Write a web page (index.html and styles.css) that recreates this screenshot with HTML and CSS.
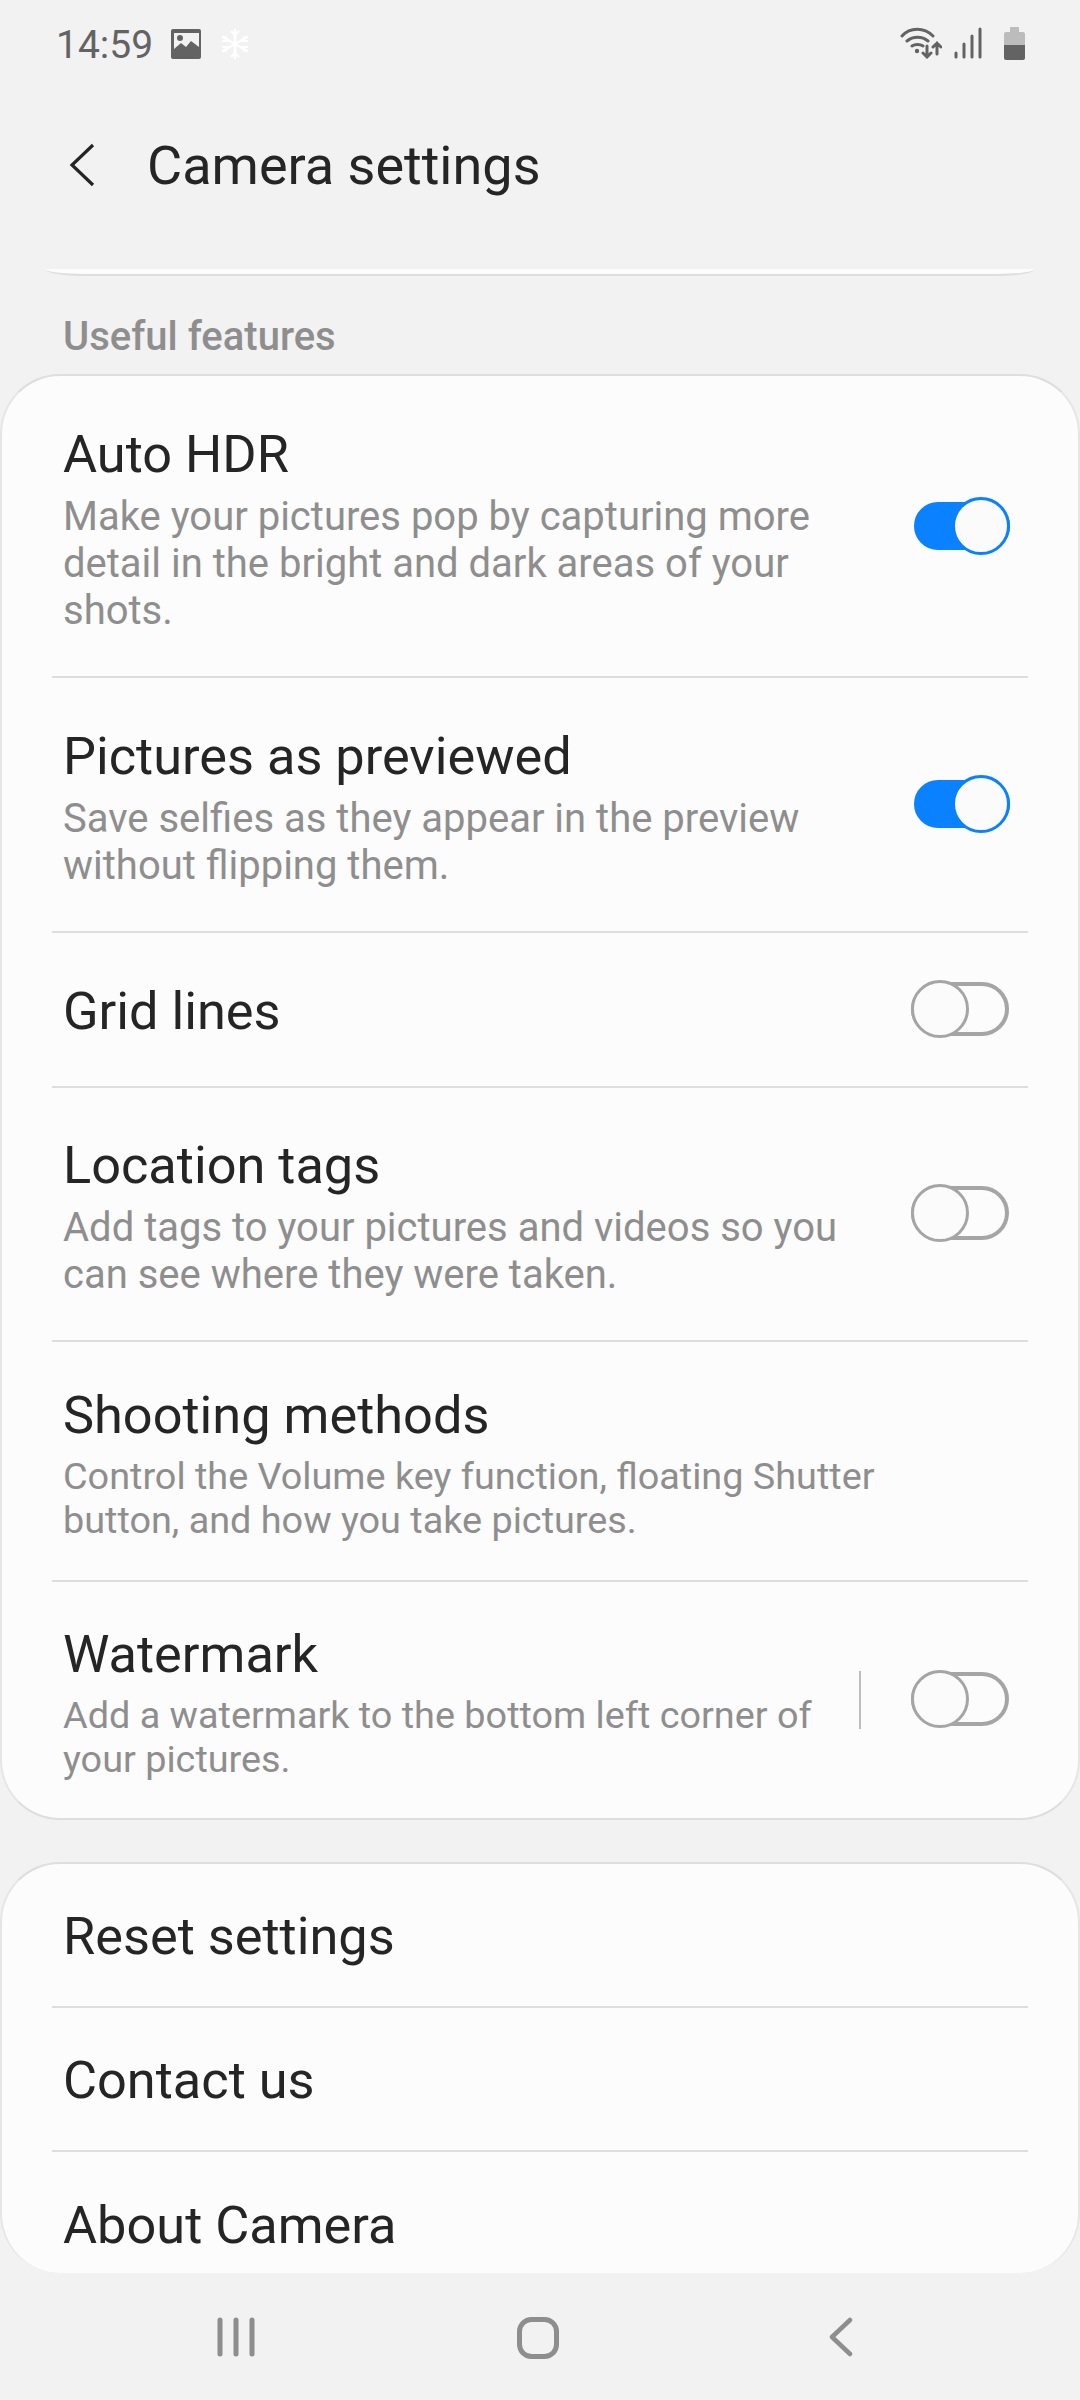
FILE: index.html
```html
<!DOCTYPE html>
<html lang="en">
<head>
    <meta charset="UTF-8">
    <title>Camera settings</title>
    <link rel="stylesheet" href="styles.css">
</head>
<body>
<div class="statusBar">
    <div class="statusLeft">
        <span class="clock">14:59</span>
        <svg class="galleryIcon" width="30" height="30" viewBox="0 0 30 30">
            <path fill="#636363" fill-rule="evenodd" d="M2 0h26a2 2 0 0 1 2 2v26a2 2 0 0 1-2 2H2a2 2 0 0 1-2-2V2a2 2 0 0 1 2-2zM3 4v16l7-6 5 4 5-6 8 6V4z"/>
            <circle cx="9" cy="9" r="3" fill="#636363"/>
        </svg>
        <svg class="snowIcon" width="32" height="32" viewBox="0 0 32 32" stroke="#fff" stroke-width="2.500" fill="none">
            <path d="M16 1v30M3 8.500l26 15M3 23.500l26-15"/>
            <path stroke-width="2" d="M12 3l4 4 4-4M12 29l4-4 4 4M3 13l6 0-3-5M29 13l-6 0 3-5M3 19l6 0-3 5M29 19l-6 0 3 5"/>
        </svg>
    </div>
    <div class="statusRight">
        <svg class="wifiIcon" width="42" height="32" viewBox="0 0 42 32" fill="none" stroke="#636363" stroke-width="3" stroke-linecap="round">
            <path d="M2 9C10 0 24 0 33 9M7 14c6-5 15-5 21 0M12 19c3-2 8-2 11 0"/>
            <circle cx="17" cy="24" r="2.200" fill="#636363" stroke="none"/>
            <path d="M27 19v11M23 26l4 4 4-4M37 27V16M33 20l4-4 4 4"/>
        </svg>
        <svg class="signalIcon" width="28" height="32" viewBox="0 0 28 32" fill="none" stroke="#636363" stroke-width="3" stroke-linecap="round">
            <path d="M2 30v-4M10 30V17M18 30V9M26 30V2"/>
        </svg>
        <svg class="batteryIcon" width="21" height="33" viewBox="0 0 21 33">
            <path fill="#bcbcbc" d="M6 0h9v5h4a2 2 0 0 1 2 2v11H0V7a2 2 0 0 1 2-2h4z"/>
            <path fill="#636363" d="M0 18h21v13a2 2 0 0 1-2 2H2a2 2 0 0 1-2-2z"/>
        </svg>
    </div>
</div>

<div class="header">
    <svg width="26" height="44" viewBox="0 0 26 44" fill="none" stroke="#252525" stroke-width="3.200">
        <path d="M24 2L3 22l21 20"/>
    </svg>
    <span class="headerTitle">Camera settings</span>
</div>

<div class="stubCard"></div>
<div class="sectionLabel">Useful features</div>

<div class="card">
    <div class="row rowHdr">
        <div class="rowText">
            <div class="rowTitle">Auto HDR</div>
            <div class="rowSub">Make your pictures pop by capturing more<br>detail in the bright and dark areas of your<br>shots.</div>
        </div>
        <div class="toggle on"><div class="knob"></div></div>
    </div>
    <div class="row rowPreview">
        <div class="rowText">
            <div class="rowTitle">Pictures as previewed</div>
            <div class="rowSub">Save selfies as they appear in the preview<br>without flipping them.</div>
        </div>
        <div class="toggle on"><div class="knob"></div></div>
    </div>
    <div class="row rowGrid">
        <div class="rowText">
            <div class="rowTitle">Grid lines</div>
        </div>
        <div class="toggle"><div class="knob"></div></div>
    </div>
    <div class="row rowLocation">
        <div class="rowText">
            <div class="rowTitle">Location tags</div>
            <div class="rowSub">Add tags to your pictures and videos so you<br>can see where they were taken.</div>
        </div>
        <div class="toggle"><div class="knob"></div></div>
    </div>
    <div class="row rowShooting">
        <div class="rowText">
            <div class="rowTitle">Shooting methods</div>
            <div class="rowSub tight">Control the Volume key function, floating Shutter<br>button, and how you take pictures.</div>
        </div>
    </div>
    <div class="row rowWatermark">
        <div class="rowText">
            <div class="rowTitle">Watermark</div>
            <div class="rowSub tight">Add a watermark to the bottom left corner of<br>your pictures.</div>
        </div>
        <div class="vline"></div>
        <div class="toggle"><div class="knob"></div></div>
    </div>
</div>

<div class="card lastCard">
    <div class="row rowSimple"><div class="rowTitle">Reset settings</div></div>
    <div class="row rowSimple"><div class="rowTitle">Contact us</div></div>
    <div class="row rowSimple"><div class="rowTitle">About Camera</div></div>
</div>

<div class="navBar">
    <svg width="38" height="40" viewBox="0 0 38 40" fill="none" stroke="#8e8e8e" stroke-width="5" stroke-linecap="round">
        <path d="M3 3v34M19 3v34M35 3v34"/>
    </svg>
    <svg class="navHome" width="42" height="42" viewBox="0 0 42 42" fill="none" stroke="#8e8e8e" stroke-width="5">
        <rect x="2.500" y="2.500" width="37" height="37" rx="12"/>
    </svg>
    <svg width="24" height="40" viewBox="0 0 24 40" fill="none" stroke="#8e8e8e" stroke-width="4.500" stroke-linecap="round" stroke-linejoin="round">
        <path d="M21 3L3 20l18 17"/>
    </svg>
</div>
</body>
</html>
```

FILE: styles.css
```css
*{
    box-sizing: border-box;
}
body{
    margin: 0;
    height: 2400px;
    overflow: hidden;
    background-color: #f2f2f2;
    font-family: Roboto, sans-serif;
    position: relative;
}
.statusBar{
    height: 84px;
    padding: 22px 55px 0 56px;
    display: flex;
    justify-content: space-between;
}
.statusLeft{
    display: flex;
    align-items: flex-start;
}
.clock{
    font-size: 39px;
    line-height: 46px;
    color: #636363;
}
.galleryIcon{
    margin: 7px 0 0 18px;
}
.snowIcon{
    margin: 6px 0 0 18px;
}
.statusRight{
    display: flex;
    align-items: flex-start;
    padding-top: 5px;
}
.signalIcon{
    margin-left: 12px;
}
.batteryIcon{
    margin-left: 22px;
}
.header{
    height: 185px;
    padding: 0 0 23px 69px;
    display: flex;
    align-items: center;
    gap: 52px;
}
.headerTitle{
    font-size: 54px;
    color: #252525;
}
.stubCard{
    margin: 0 45px;
    height: 7px;
    background-color: #fcfcfc;
    border-bottom: 2px solid #dedede;
    border-radius: 0 0 40px 40px / 0 0 7px 7px;
}
.sectionLabel{
    margin-top: 36px;
    padding-left: 63px;
    height: 62px;
    font-size: 40px;
    line-height: 50px;
    font-weight: 500;
    color: #8e8e8e;
}
.card{
    background-color: #fcfcfc;
    border: 2px solid #dedede;
    border-left-color: #e6e6e6;
    border-right-color: #e6e6e6;
    border-radius: 60px;
    height: 1446px;
}
.lastCard{
    margin-top: 42px;
    height: 411px;
    border-bottom: 0;
}
.row{
    margin: 0 50px;
    padding: 0 18px 0 11px;
    display: flex;
    align-items: center;
    border-bottom: 2px solid #dedede;
}
.row:last-child{
    border-bottom: 0;
}
.rowHdr{ height: 302px; }
.rowPreview{ height: 255px; }
.rowGrid{ height: 155px; }
.rowGrid .rowText{ padding-top: 2px; }
.rowLocation{ height: 254px; }
.rowShooting{ height: 240px; }
.rowWatermark{ height: 236px; }
.rowSimple{ height: 144px; padding-top: 2px; }
.rowText{
    flex: 1;
}
.rowTitle{
    font-size: 52.300px;
    line-height: 78px;
    color: #252525;
}
.rowSub{
    margin-bottom: 4px;
    font-size: 40px;
    line-height: 47px;
    color: #8e8e8e;
}
.rowSub.tight{
    font-size: 37.800px;
    line-height: 44px;
}
.toggle{
    position: relative;
    width: 98px;
    height: 54px;
    margin: 0 1px 2px 0;
    border: 4px solid #a5a5a5;
    border-radius: 27px;
}
.toggle.on{
    width: 96px;
    height: 48px;
    margin: 0 0 1px;
    background-color: #0a81ff;
    border-color: #0a81ff;
}
.knob{
    position: absolute;
    left: -4px;
    top: -6px;
    width: 58px;
    height: 58px;
    border: 3px solid #a5a5a5;
    border-radius: 50%;
    background-color: #fbfbfb;
}
.on .knob{
    left: auto;
    right: -4px;
    top: -9px;
    border-color: #0a81ff;
}
.vline{
    width: 2px;
    height: 58px;
    margin-right: 50px;
    background-color: #bcbcbc;
}
.navBar{
    position: absolute;
    left: 0;
    right: 0;
    bottom: 0;
    height: 127px;
    background-color: #f2f2f2;
    padding: 44px 227px 0 217px;
    display: flex;
    align-items: flex-start;
    justify-content: space-between;
}
.navHome{
    margin-right: 8px;
}
```
